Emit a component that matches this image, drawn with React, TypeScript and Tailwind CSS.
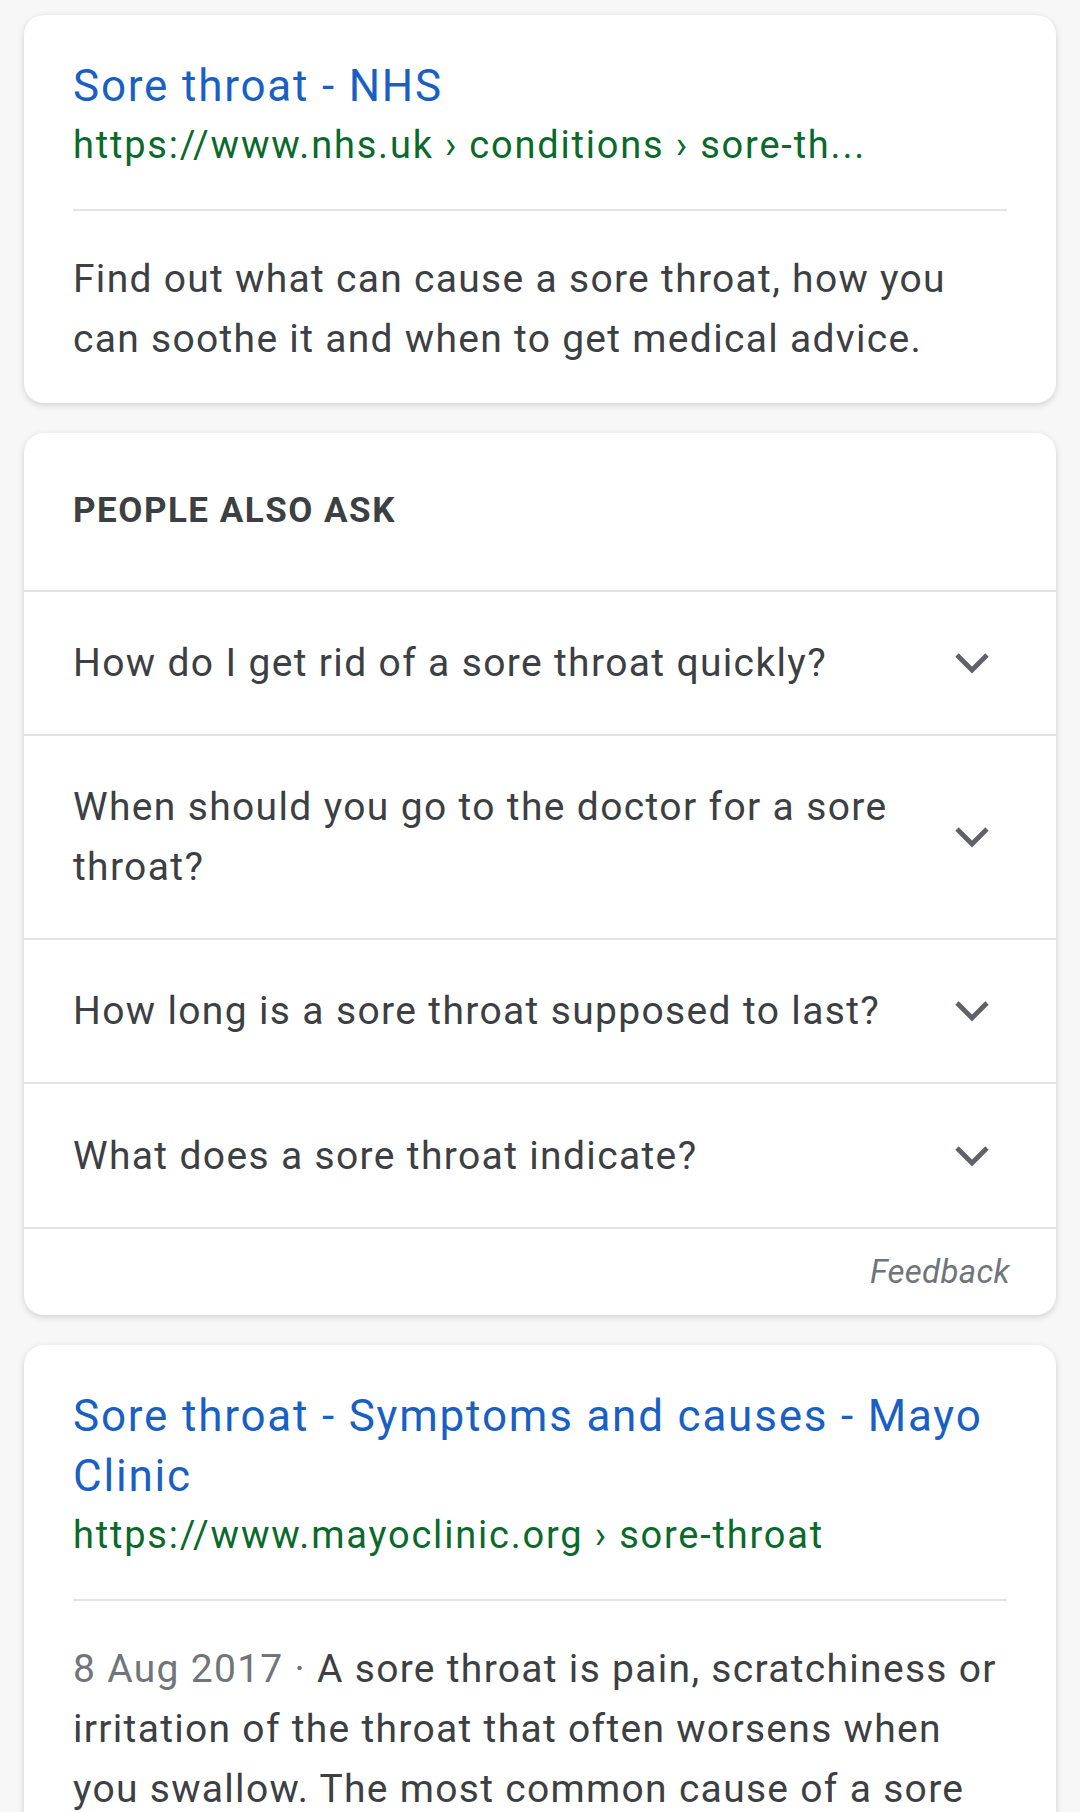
import React from "react";

const font = { fontFamily: "Roboto, 'Noto Sans', Arial, sans-serif" };

function Chevron() {
  return (
    <svg width="36" height="22" viewBox="0 0 36 22" className="shrink-0">
      <polyline points="3,3 18,18 33,3" fill="none" stroke="#5f6368" strokeWidth="4.8" strokeLinejoin="miter" />
    </svg>
  );
}

function ResultCard({ title, url, children }: { title: string; url: string; children: React.ReactNode }) {
  return (
    <div className="bg-white rounded-[20px] shadow-[0_2px_6px_rgba(32,33,36,0.18)] px-[49px] pt-[41px] pb-[34px]">
      <div className="text-[44px] leading-[60px] tracking-[1.8px] text-[#1a5fc4]">{title}</div>
      <div className="mt-[5px] text-[38px] leading-[48px] tracking-[1.8px] text-[#0b6a2b] whitespace-nowrap">{url}</div>
      <div className="mt-[40px] h-[2px] bg-[#e3e3e3]" />
      <div className="mt-[38px] text-[39px] leading-[60px] tracking-[1.3px] text-[#3c4043]">{children}</div>
    </div>
  );
}

const questions: { q: string; h: string }[] = [
  { q: "How do I get rid of a sore throat quickly?", h: "h-[144px]" },
  { q: "When should you go to the doctor for a sore throat?", h: "h-[204px]" },
  { q: "How long is a sore throat supposed to last?", h: "h-[144px]" },
  { q: "What does a sore throat indicate?", h: "h-[145px]" },
];

export default function App() {
  return (
    <div style={font} className="h-[1812px] bg-[#f7f7f7] px-[24px] pt-[15px] flex flex-col gap-[30px] overflow-hidden">
      <ResultCard title="Sore throat - NHS" url="https://www.nhs.uk › conditions › sore-th...">
        Find out what can cause a sore throat, how you can soothe it and when to get medical advice.
      </ResultCard>

      <div className="bg-white rounded-[20px] shadow-[0_2px_6px_rgba(32,33,36,0.18)] overflow-hidden shrink-0">
        <div className="h-[157px] flex items-center px-[49px]">
          <span className="text-[35px] font-bold tracking-[1.5px] text-[#3c4043]">PEOPLE ALSO ASK</span>
        </div>
        {questions.map((item) => (
          <div key={item.q} className={`${item.h} border-t-2 border-[#e3e3e3] flex items-center pl-[49px] pr-[66px] gap-[24px]`}>
            <div className="flex-1 text-[39px] leading-[60px] tracking-[1.35px] text-[#3c4043]">{item.q}</div>
            <Chevron />
          </div>
        ))}
        <div className="h-[88px] border-t-2 border-[#e3e3e3] flex items-center justify-end pr-[46px]">
          <span className="text-[33px] italic tracking-[0.3px] text-[#70757a]">Feedback</span>
        </div>
      </div>

      <div className="shrink-0">
        <ResultCard title="Sore throat - Symptoms and causes - Mayo Clinic" url="https://www.mayoclinic.org › sore-throat">
          <span className="text-[#70757a]">8 Aug 2017 · </span>A sore throat is pain, scratchiness or irritation of the throat that often worsens when you swallow. The most common cause of a sore throat (pharyngitis) is a viral infection, such as a cold or the flu.
        </ResultCard>
      </div>
    </div>
  );
}
